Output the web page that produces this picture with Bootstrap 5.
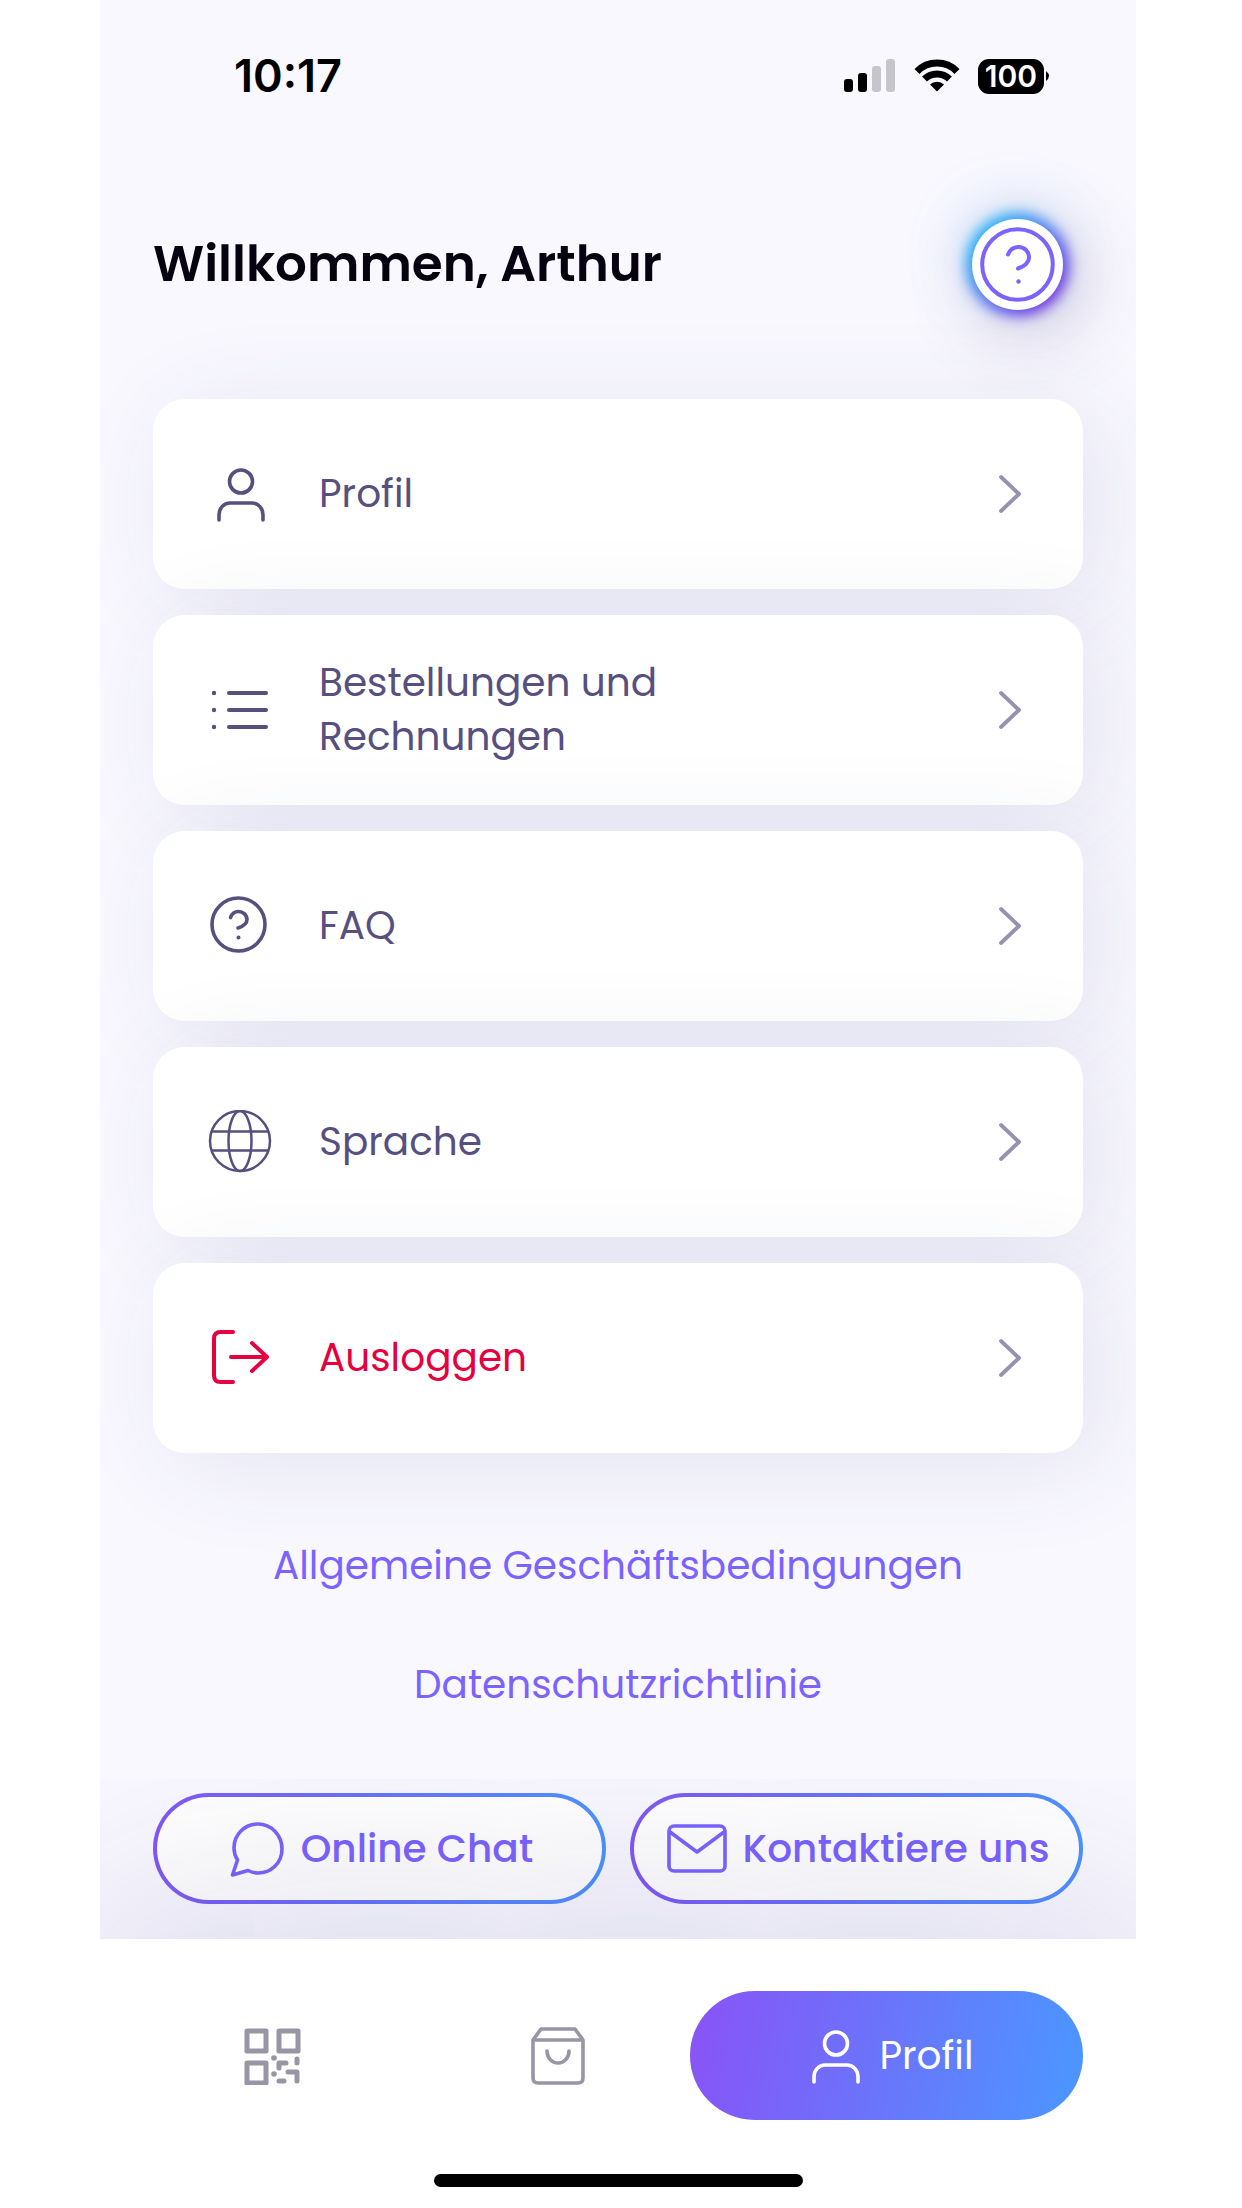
<!DOCTYPE html>
<html lang="de">
<head>
<meta charset="utf-8">
<meta name="viewport" content="width=device-width, initial-scale=1">
<title>Profil</title>
<link href="https://cdn.jsdelivr.net/npm/bootstrap@5.3.0/dist/css/bootstrap.min.css" rel="stylesheet">
<style>
  :root { --ink: #57507f; --violet: #7b63ff; --ff: Poppins, Inter, "Noto Sans", sans-serif; }
  body { background: #fff; font-family: var(--ff); font-size: 39px; line-height: 54px; color: var(--ink); padding: 0 106px 0 100px; }
  svg { display: block; flex: none; fill: none; stroke: currentColor; stroke-linecap: round; stroke-linejoin: round; }
  .app { overflow: hidden; }
  .screen { background: #f9f8ff; padding: 0 53px 35px; }
  .statusbar { height: 152px; padding: 0 33px 0 81px; color: #000; font-family: Inter, sans-serif; }
  .clock { font-size: 45px; font-weight: 600; }
  .battery { width: 66px; height: 35px; border-radius: 11px; background: #000; color: #fff; font-size: 30px; line-height: 35px; font-weight: 600; }
  .headbar { height: 224px; padding-right: 20px; }
  .headbar h1 { font-size: 50px; line-height: 64px; font-weight: 600; color: #06020f; }
  .glow { position: relative; z-index: 0; border-radius: 50%; box-shadow: -6px -10px 60px rgba(90,180,245,.28), 14px 16px 80px rgba(70,50,110,.32); }
  .glow::before { content: ""; position: absolute; inset: -6px; z-index: -1; border-radius: 50%; background: linear-gradient(135deg, #12bcfa 10%, #4f74f0 50%, #6a1fdc 88%); filter: blur(7px); }
  .help-btn { display: block; width: 91px; height: 91px; padding: 8px; border: 0; border-radius: 50%; background: #fff; color: var(--violet); }
  .menu { gap: 26px; padding-top: 23px; }
  .menu-item { height: 190px; border-radius: 32px; background: #fff; color: var(--ink); text-decoration: none; padding: 0 62px 0 54px;
    box-shadow: 20px 12px 100px rgba(50,54,120,.1); }
  .menu-item .ico { width: 66px; margin-right: 46px; }
  .menu-item .txt { max-width: 400px; }
  .menu-item .chev { color: #9790b2; }
  .menu-item .logout { color: #e5003f; }
  .legal { padding: 85px 0 81px; gap: 64px; }
  .legal a { color: var(--violet); text-decoration: none; line-height: 55px; }
  .contact { gap: 24px; }
  .contact button { flex: 1 1 0; gap: 16px; height: 111px; border: 4px solid transparent; border-radius: 56px; color: var(--violet); font-weight: 500; padding: 0 0 0 3px; white-space: nowrap;
    background: linear-gradient(#fff, #fff) padding-box, linear-gradient(90deg, #8058f6, #4d92ff) border-box; }
  .tabs { position: relative; background: #fff; padding: 52px 53px 54px 144px; }
  .tabs::before { content: ""; position: absolute; inset: 0 20px; box-shadow: 0 0 220px 6px rgba(46,46,116,.22); z-index: 0; }
  .tabs::after { content: ""; position: absolute; inset: 0; background: #fff; }
  .tabs > * { z-index: 1; }
  .tabs .tab { color: #9895a5; }
  .tabs .shop { margin-right: 104px; }
  .tabs .pill { width: 393px; height: 129px; gap: 18px; padding-left: 12px; border-radius: 65px; color: #fff; text-decoration: none; background: linear-gradient(100deg, #8656f7 5%, #4d94ff 95%); }
  .homebar { position: relative; background: #fff; padding-bottom: 21px; }
  .homebar span { width: 369px; height: 13px; border-radius: 7px; background: #000; }
</style>
</head>
<body>
<div class="app">
  <main class="screen">
    <div class="statusbar d-flex align-items-center justify-content-between">
      <span class="clock">10:17</span>
      <div class="d-flex align-items-center">
        <svg width="54" height="34" viewBox="0 0 54 34"><g fill="#000" stroke="none"><rect x="0" y="20" width="9" height="13" rx="3"/><rect x="14" y="14" width="9" height="19" rx="3"/></g><g fill="#c6c5cb" stroke="none"><rect x="28" y="7" width="9" height="26" rx="3"/><rect x="42" y="0" width="9" height="33" rx="3"/></g></svg>
        <svg class="ms-3 me-3" width="48" height="34" viewBox="1 0 48 34"><g stroke="#000" stroke-width="7" stroke-linecap="butt"><path d="M4 12.500a28 28 0 0 1 40 0"/><path d="M11.500 20a18 18 0 0 1 25 0"/></g><path d="M24 32.500l-7-7a10 10 0 0 1 14 0z" fill="#000" stroke="none"/></svg>
        <span class="battery text-center">100</span>
        <svg width="6" height="12" viewBox="0 0 6 12"><path d="M2 1q6 5 0 10z" fill="#000" stroke="none"/></svg>
      </div>
    </div>

    <header class="headbar d-flex align-items-center justify-content-between">
      <h1 class="m-0">Willkommen, Arthur</h1>
      <div class="glow"><button class="help-btn" type="button" aria-label="Hilfe">
        <svg width="75" height="75" viewBox="0 0 75 75" stroke-width="4"><circle cx="37.500" cy="37.500" r="35.300"/><path d="M28 27.500c2-5 6-7.500 10.500-7.500 6 0 10.500 4.500 10.500 10.500 0 5-4 8.500-11 11"/><circle cx="38.500" cy="54.500" r="2.200" fill="currentColor" stroke="none"/></svg>
      </button></div>
    </header>

    <nav class="menu d-flex flex-column" aria-label="Konto">
      <a class="menu-item d-flex align-items-center" href="#profil">
        <span class="ico d-flex justify-content-center"><svg width="50" height="56" viewBox="-1 -2 50 56" stroke-width="3.600"><circle cx="25" cy="13.500" r="11.500"/><path d="M3 52v-5c0-7 5-12 11-12h22c6 0 11 5 11 12v5"/></svg></span>
        <span class="txt">Profil</span>
        <svg class="chev ms-auto" width="22" height="40" viewBox="0 0 22 40" stroke-width="3.800"><path d="M2 3l18 17L2 37"/></svg>
      </a>
      <a class="menu-item d-flex align-items-center" href="#bestellungen">
        <span class="ico d-flex justify-content-center"><svg width="58" height="42" viewBox="0 0 58 42" stroke-width="4"><path d="M18 4h37M18 21h37M18 38h37"/><g fill="currentColor" stroke="none"><circle cx="3" cy="4" r="2.200"/><circle cx="3" cy="21" r="2.200"/><circle cx="3" cy="38" r="2.200"/></g></svg></span>
        <span class="txt">Bestellungen und Rechnungen</span>
        <svg class="chev ms-auto" width="22" height="40" viewBox="0 0 22 40" stroke-width="3.800"><path d="M2 3l18 17L2 37"/></svg>
      </a>
      <a class="menu-item d-flex align-items-center" href="#faq">
        <span class="ico d-flex justify-content-center"><svg width="60" height="60" viewBox="0 0 60 60" stroke-width="3.600"><circle cx="28.500" cy="28.500" r="26.500"/><path d="M20.500 21.500c1.500-4 4.500-6 8-6 4.500 0 8.500 3.500 8.500 8s-3 6.500-9 8.500"/><circle cx="28.500" cy="41.500" r="2" fill="currentColor" stroke="none"/></svg></span>
        <span class="txt">FAQ</span>
        <svg class="chev ms-auto" width="22" height="40" viewBox="0 0 22 40" stroke-width="3.800"><path d="M2 3l18 17L2 37"/></svg>
      </a>
      <a class="menu-item d-flex align-items-center" href="#sprache">
        <span class="ico d-flex justify-content-center"><svg width="64" height="64" viewBox="0 1 64 64" stroke-width="2.500"><circle cx="32" cy="32" r="30"/><ellipse cx="32" cy="32" rx="11.500" ry="30"/><path d="M4 22.500h56M4 41.500h56"/></svg></span>
        <span class="txt">Sprache</span>
        <svg class="chev ms-auto" width="22" height="40" viewBox="0 0 22 40" stroke-width="3.800"><path d="M2 3l18 17L2 37"/></svg>
      </a>
      <a class="menu-item d-flex align-items-center" href="#ausloggen">
        <span class="ico d-flex justify-content-center logout"><svg width="58" height="56" viewBox="0 1 58 56" stroke-width="4"><path d="M22 3H9.500Q3 3 3 9.500v37Q3 53 9.500 53H22M20 28h36M41 14l15 14-15 14"/></svg></span>
        <span class="txt logout">Ausloggen</span>
        <svg class="chev ms-auto" width="22" height="40" viewBox="0 0 22 40" stroke-width="3.800"><path d="M2 3l18 17L2 37"/></svg>
      </a>
    </nav>

    <div class="legal d-flex flex-column align-items-center">
      <a href="#agb">Allgemeine Geschäftsbedingungen</a>
      <a href="#datenschutz">Datenschutzrichtlinie</a>
    </div>

    <div class="contact d-flex">
      <button type="button" class="d-flex align-items-center justify-content-center"><svg width="56" height="56" viewBox="0 0 56 56" stroke-width="3.600"><path d="M8.500 39C6 35 5 31 5 27 5 13 16 3 29 3s24 11 24 25-11 24-24 24c-4 0-7-1-10-2.500L3.500 54z"/></svg>Online Chat</button>
      <button type="button" class="d-flex align-items-center justify-content-center"><svg width="60" height="50" viewBox="0 0 60 50" stroke-width="3.600"><rect x="2" y="2" width="56" height="45" rx="5"/><path d="M3 8l27 20L57 8"/></svg>Kontaktiere uns</button>
    </div>
  </main>

  <nav class="tabs d-flex align-items-center" aria-label="Hauptnavigation">
    <a class="tab flex-fill d-flex" href="#code" aria-label="QR-Code"><svg width="58" height="58" viewBox="1 0 58 58" stroke-width="5"><rect x="4" y="4" width="19" height="20"/><rect x="36" y="4" width="19" height="20"/><rect x="4" y="36" width="19" height="20"/><path d="M36 41v-5h7M54 32v4M45 45h9v9M36 54h5"/><g fill="currentColor" stroke="none"><circle cx="31" cy="31" r="2.800"/><circle cx="31" cy="47" r="2.800"/></g></svg></a>
    <a class="tab shop d-flex" href="#shop" aria-label="Shop"><svg width="56" height="60" viewBox="0 0 56 60" stroke-width="3.600"><path d="M3 14l8-11h34l8 11v38q0 5-5 5H8q-5 0-5-5zM3 14h50M17 25c0 7 5 12 11 12s11-5 11-12"/></svg></a>
    <a class="pill d-flex align-items-center justify-content-center" href="#profil" aria-current="page"><svg width="50" height="56" viewBox="0 -2 50 56" stroke-width="3.600"><circle cx="25" cy="13.500" r="11.500"/><path d="M3 52v-5c0-7 5-12 11-12h22c6 0 11 5 11 12v5"/></svg>Profil</a>
  </nav>
  <div class="homebar d-flex justify-content-center"><span></span></div>
</div>
<script src="https://cdn.jsdelivr.net/npm/bootstrap@5.3.0/dist/js/bootstrap.bundle.min.js"></script>
</body>
</html>
